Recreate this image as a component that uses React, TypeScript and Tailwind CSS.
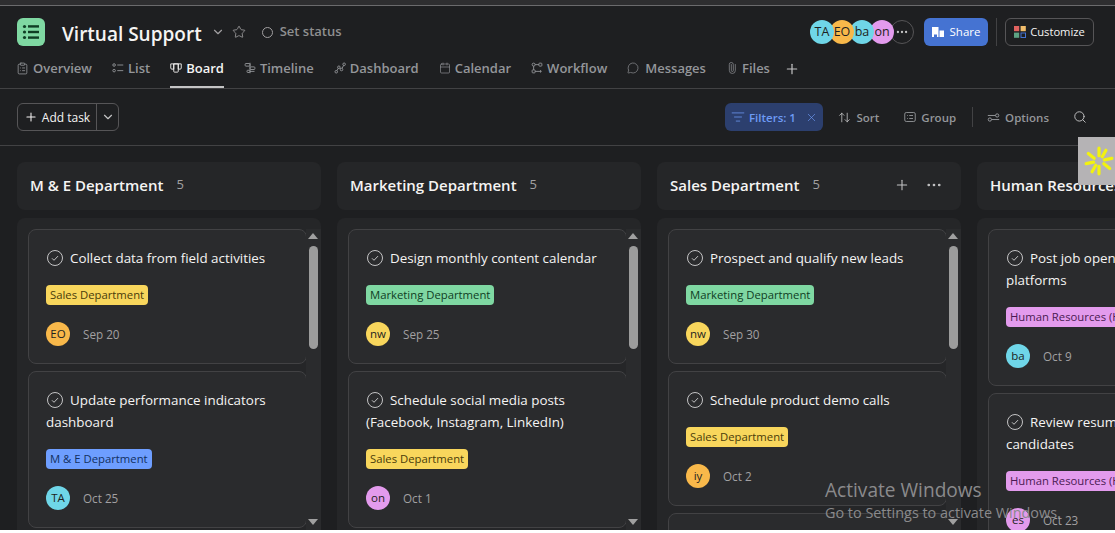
import { Plus, Star, ChevronDown, ListFilter, X, ArrowUpDown, Search, Ellipsis, Paperclip, MessageCircle, Calendar, ClipboardList } from 'lucide-react'
import type { ReactNode } from 'react'

type Task = {
  title: string
  tag: string
  tagClass: string
  who: string
  whoClass: string
  date: string
}

const sales = 'bg-[#f8d65c] text-[#4a3c0a]'
const marketing = 'bg-[#7fd8a2] text-[#0f3d24]'
const me = 'bg-[#6e9eff] text-[#12305f]'
const hr = 'bg-[#e39bed] text-[#4a1a52]'
const cyan = 'bg-[#6fd6e8]'
const orange = 'bg-[#f8b84a]'
const yellow = 'bg-[#f8d65c]'
const pink = 'bg-[#e39bed]'

const columns: { name: string; actions?: boolean; tasks: Task[] }[] = [
  {
    name: 'M & E Department',
    tasks: [
      { title: 'Collect data from field activities', tag: 'Sales Department', tagClass: sales, who: 'EO', whoClass: orange, date: 'Sep 20' },
      { title: 'Update performance indicators dashboard', tag: 'M & E Department', tagClass: me, who: 'TA', whoClass: cyan, date: 'Oct 25' },
    ],
  },
  {
    name: 'Marketing Department',
    tasks: [
      { title: 'Design monthly content calendar', tag: 'Marketing Department', tagClass: marketing, who: 'nw', whoClass: yellow, date: 'Sep 25' },
      { title: 'Schedule social media posts (Facebook, Instagram, LinkedIn)', tag: 'Sales Department', tagClass: sales, who: 'on', whoClass: pink, date: 'Oct 1' },
    ],
  },
  {
    name: 'Sales Department',
    actions: true,
    tasks: [
      { title: 'Prospect and qualify new leads', tag: 'Marketing Department', tagClass: marketing, who: 'nw', whoClass: yellow, date: 'Sep 30' },
      { title: 'Schedule product demo calls', tag: 'Sales Department', tagClass: sales, who: 'iy', whoClass: orange, date: 'Oct 2' },
      { title: '', tag: '', tagClass: '', who: '', whoClass: '', date: '' },
    ],
  },
  {
    name: 'Human Resources (HR)',
    tasks: [
      { title: 'Post job openings on multiple platforms', tag: 'Human Resources (HR)', tagClass: hr, who: 'ba', whoClass: cyan, date: 'Oct 9' },
      { title: 'Review resumes and shortlist candidates', tag: 'Human Resources (HR)', tagClass: hr, who: 'es', whoClass: pink, date: 'Oct 23' },
    ],
  },
]

const Ico = ({ children, size = 12 }: { children: ReactNode; size?: number }) => (
  <svg width={size} height={size} viewBox="0 0 16 16" fill="none" stroke="currentColor" strokeWidth="1.2" className="shrink-0">
    {children}
  </svg>
)

const tabs: { label: string; icon: ReactNode; active?: boolean }[] = [
  { label: 'Overview', icon: <ClipboardList size={13} strokeWidth={1.5} className="-ml-px" /> },
  {
    label: 'List',
    icon: (
      <Ico>
        <circle cx="2.8" cy="4" r="1.7" />
        <circle cx="2.8" cy="11.5" r="1.7" />
        <path d="M7 4h8M7 11.500h8" />
      </Ico>
    ),
  },
  {
    label: 'Board',
    active: true,
    icon: (
      <Ico>
        <path d="M1 2.500h14v5.500a1.500 1.500 0 0 1-1.500 1.500h-2.500V2.500M5 2.500v7H2.500A1.500 1.500 0 0 1 1 8V2.500M5 2.500h6v10a1 1 0 0 1-1 1H6a1 1 0 0 1-1-1z" />
      </Ico>
    ),
  },
  {
    label: 'Timeline',
    icon: (
      <Ico>
        <path d="M8 1v14" />
        <rect x="1.500" y="2" width="6.500" height="3.500" rx="1" />
        <rect x="8" y="6.500" width="6.500" height="3.500" rx="1" />
        <rect x="4" y="11" width="4" height="3" rx="1" />
        <path d="M8 12.500h6" />
      </Ico>
    ),
  },
  {
    label: 'Dashboard',
    icon: (
      <Ico>
        <circle cx="3" cy="13" r="1.700" />
        <circle cx="6.500" cy="7" r="1.700" />
        <circle cx="10" cy="10" r="1.700" />
        <circle cx="13.500" cy="3" r="1.700" />
        <path d="M3.900 11.500l1.700-3M7.800 8.100l1 .9M10.800 8.500l2-4" />
      </Ico>
    ),
  },
  { label: 'Calendar', icon: <Calendar size={12} strokeWidth={1.3} /> },
  {
    label: 'Workflow',
    icon: (
      <Ico>
        <circle cx="3.500" cy="3.500" r="2" />
        <rect x="10.500" y="1.500" width="4" height="4" rx="1" />
        <rect x="1.500" y="10.500" width="4" height="4" rx="1" />
        <path d="M5.500 3.500h5M3.500 5.500v5M5.500 12.500h8M12 11l1.800 1.500L12 14" />
      </Ico>
    ),
  },
  { label: 'Messages', icon: <MessageCircle size={12} strokeWidth={1.3} className="mr-[2px]" /> },
  { label: 'Files', icon: <Paperclip size={12} strokeWidth={1.3} className="-rotate-45" /> },
]

function Avatar({ text, className, big }: { text: string; className: string; big?: boolean }) {
  return (
    <div className={`flex h-6 w-6 shrink-0 items-center justify-center rounded-full text-[#1e1f21] ${big ? 'text-[12.5px]' : 'text-[11.5px]'} ${className}`}>
      {text}
    </div>
  )
}

function TaskCard({ task }: { task: Task }) {
  return (
    <div className="w-[279px] shrink-0 rounded-lg border border-[#424244] bg-[#2a2b2d] pb-[17px] pl-[17px] pr-4 pt-[17px]">
      {task.title && (
        <>
          <div className="text-[13.4px] font-medium leading-[22px] text-[#f5f4f3]">
            <span className="ml-px mr-[7px] inline-block h-4 w-4 align-[-3px] text-[#c4c4c5]">
              <svg width="16" height="16" viewBox="0 0 16 16" fill="none" stroke="currentColor" strokeWidth="1">
                <circle cx="8" cy="8" r="7.500" />
                <path d="M5 8.300l2 2 4-4.200" />
              </svg>
            </span>
            {task.title}
          </div>
          <div className="mt-4 flex">
            <span className={`flex h-5 items-center whitespace-nowrap rounded px-1 pt-px text-[11.3px] ${task.tagClass}`}>{task.tag}</span>
          </div>
          <div className="mt-[17px] flex items-center gap-[13px]">
            <Avatar text={task.who} className={task.whoClass} />
            <span className="pt-px text-[11.7px] text-[#a2a0a2]">{task.date}</span>
          </div>
        </>
      )}
    </div>
  )
}

function Column({ name, actions, tasks }: (typeof columns)[number]) {
  return (
    <div className="flex w-[304px] shrink-0 flex-col gap-2">
      <div className="flex h-12 shrink-0 items-center rounded-lg bg-[#252628] pb-[2px] pl-[13px] pr-[18px]">
        <span className="whitespace-nowrap text-[15px] font-semibold text-[#f5f4f3]">{name}</span>
        <span className="ml-[13px] text-[13px] text-[#a2a0a2]">5</span>
        {actions && (
          <div className="ml-auto flex items-center gap-[15px] text-[#c4c4c5]">
            <Plus size={16} strokeWidth={1.6} />
            <Ellipsis size={18} strokeWidth={1.6} />
          </div>
        )}
      </div>
      <div className="flex min-h-0 flex-1 rounded-t-lg bg-[#252628] pl-[11px]">
        <div className="flex w-[278px] flex-col gap-[7px] overflow-hidden pt-[11px]">
          {tasks.map((t, i) => (
            <TaskCard key={i} task={t} />
          ))}
        </div>
        <div className="mt-[11px] flex w-[15px] flex-col items-center bg-[#2a2b2d] pr-px pt-[4px]">
          <div className="h-0 w-0 border-x-[5px] border-b-[6px] border-x-transparent border-b-[#a0a0a0]" />
          <div className="mt-[7px] h-[103px] w-[9px] rounded-full bg-[#9c9c9c]" />
          <div className="mb-[5px] mt-auto h-0 w-0 border-x-[5px] border-t-[6px] border-x-transparent border-t-[#a0a0a0]" />
        </div>
      </div>
    </div>
  )
}

export default function App() {
  return (
    <div className="relative flex h-[533px] w-[1115px] flex-col overflow-hidden bg-white font-['Open_Sans',sans-serif] text-[13px]">
      <div className="h-[5px] shrink-0 bg-[#2e2e30]" />
      <div className="flex min-h-0 flex-1 flex-col border-t border-[#6b6b6d] bg-[#1e1f21]">
        {/* Project header */}
        <div className="flex h-[83px] shrink-0 flex-col border-b border-[#424244] pl-[17px] pr-[21px] pt-3">
          <div className="flex h-7 items-center">
            <div className="flex h-7 w-7 items-center justify-center rounded-md bg-[#7fd8a2] text-[#0f3d24]">
              <svg width="18" height="16" viewBox="0 0 18 16" fill="currentColor">
                <circle cx="2.500" cy="2.500" r="1.600" />
                <circle cx="2.500" cy="8" r="1.600" />
                <circle cx="2.500" cy="13.500" r="1.600" />
                <rect x="6" y="1.200" width="11" height="2.400" />
                <rect x="6" y="6.800" width="11" height="2.400" />
                <rect x="6" y="12.400" width="11" height="2.400" />
              </svg>
            </div>
            <span className="ml-[17px] whitespace-nowrap pt-1 text-[19px] font-semibold text-[#f5f4f3]">Virtual Support</span>
            <ChevronDown size={14} className="ml-[9px] text-[#a2a0a2]" />
            <Star size={14} strokeWidth={1.4} className="ml-[7px] text-[#a2a0a2]" />
            <div className="ml-4 h-[11px] w-[11px] rounded-full border border-[#a2a0a2]" />
            <span className="ml-[7px] whitespace-nowrap text-[13px] font-semibold text-[#8f8f90]">Set status</span>
            <div className="ml-auto flex items-center">
              <div className="flex">
                <Avatar big text="TA" className={`${cyan} relative z-40`} />
                <Avatar big text="EO" className={`${orange} relative z-30 -ml-1`} />
                <Avatar big text="ba" className={`${cyan} relative z-20 -ml-1`} />
                <Avatar big text="on" className={`${pink} relative z-10 -ml-1`} />
                <div className="-ml-1 flex h-6 w-6 items-center justify-center rounded-full border border-[#565557] text-[#c4c4c5]">
                  <Ellipsis size={14} />
                </div>
              </div>
              <button className="ml-[10px] flex h-7 w-16 items-center justify-center gap-[6px] rounded-md bg-[#4573d2] text-[11.5px] font-medium text-white">
                <svg width="12" height="12" viewBox="0 0 12 12" fill="currentColor">
                  <path d="M0 1h6.500v10H5V8.500H2V11H0zM7.500 4.500H12V11H7.500z" />
                </svg>
                Share
              </button>
              <div className="ml-2 h-7 w-px bg-[#424244]" />
              <button className="ml-2 flex h-7 w-[89px] items-center justify-center gap-1 rounded-md border border-[#565557] text-[11.200px] font-medium text-[#f5f4f3]">
                <svg width="12" height="12" viewBox="0 0 12 12">
                  <rect width="5.200" height="5.200" fill="#e0625f" />
                  <rect x="6.600" width="5.200" height="5.200" fill="#f1bd6c" />
                  <rect y="6.600" width="5.200" height="5.200" fill="#5da283" />
                  <rect x="7" y="7" width="4.500" height="4.500" fill="none" stroke="#4573d2" />
                </svg>
                Customize
              </button>
            </div>
          </div>
          <div className="mt-auto flex items-start gap-5">
            {tabs.map((t) => (
              <div
                key={t.label}
                className={`flex h-[31px] items-start gap-1 border-b-2 pt-[2px] ${t.active ? 'border-[#c4c4c5] text-[#f5f4f3]' : 'border-transparent text-[#94969a]'}`}
              >
                <span className="mt-[3px] min-w-3">{t.icon}</span>
                <span className="text-[13px] font-semibold">{t.label}</span>
              </div>
            ))}
            <Plus size={16} strokeWidth={1.8} className="-ml-[6px] mt-1 text-[#c4c4c5]" />
          </div>
        </div>

        {/* Toolbar */}
        <div className="flex h-[57px] shrink-0 items-center border-b border-[#424244] pl-[17px] pr-7">
          <div className="flex h-7 items-center rounded-md border border-[#565557] text-[12px] font-medium text-[#f5f4f3]">
            <div className="flex h-full w-[79px] items-center justify-center gap-1 border-r border-[#565557]">
              <Plus size={14} strokeWidth={1.8} />
              <span className="pt-px">Add task</span>
            </div>
            <div className="flex w-[21px] justify-center text-[#c4c4c5]">
              <ChevronDown size={14} />
            </div>
          </div>
          <div className="ml-auto flex items-center text-[11.500px] font-semibold text-[#94969a]">
            <div className="flex h-7 w-[98px] items-center justify-center gap-1 rounded-md bg-[#2c3f6e] text-[#6e9bf5]">
              <ListFilter size={14} strokeWidth={1.3} />
              <span className="pt-px">Filters: 1</span>
              <X size={13} strokeWidth={1.2} className="ml-[5px]" />
            </div>
            <div className="ml-[15px] flex items-center gap-[5px]">
              <ArrowUpDown size={13} strokeWidth={1.5} className="text-[#c4c4c5]" />
              <span className="pt-px">Sort</span>
            </div>
            <div className="ml-[25px] flex items-center gap-[5px]">
              <Ico size={12}>
                <rect x="1" y="2" width="14" height="12" rx="2" />
                <path d="M4 6h1M7 6h5M4 10h1M7 10h5" />
              </Ico>
              <span className="pt-px">Group</span>
            </div>
            <div className="ml-4 h-5 w-px bg-[#424244]" />
            <div className="ml-[14px] flex items-center gap-[5px]">
              <Ico size={13}>
                <circle cx="3.500" cy="10.500" r="2" />
                <circle cx="12.500" cy="5.500" r="2" />
                <path d="M1 5.500h9.500M5.500 10.500h9.500" />
              </Ico>
              <span className="pt-px">Options</span>
            </div>
            <Search size={14} strokeWidth={1.6} className="ml-6 text-[#c4c4c5]" />
          </div>
        </div>

        {/* Board */}
        <div className="flex min-h-0 flex-1 gap-4 overflow-hidden pl-[17px] pt-4">
          {columns.map((c) => (
            <Column key={c.name} {...c} />
          ))}
        </div>
      </div>
      <div className="h-[3px] shrink-0 bg-white" />

      {/* floating widget */}
      <div className="absolute right-0 top-[137px] flex h-12 w-[37px] items-center justify-center bg-[#b5b3b5] pl-1">
        <svg width="30" height="30" viewBox="0 0 28 28" stroke="#f2f20f" strokeWidth="3" strokeLinecap="round">
          <path d="M14 9V2M14 19v7M9.500 11.500L4 7M18.500 16.500L24 21M9 15l-7 1.500M19 13l7-1.500M11 18l-3.500 6M17 10l3.500-6" />
        </svg>
      </div>

      {/* windows watermark */}
      <div className="pointer-events-none absolute left-[825px] top-[478px] whitespace-nowrap text-[#8a8a8c]">
        <div className="text-[19.100px] leading-6">Activate Windows</div>
        <div className="text-[14.400px] leading-[22px]">Go to Settings to activate Windows.</div>
      </div>
    </div>
  )
}
